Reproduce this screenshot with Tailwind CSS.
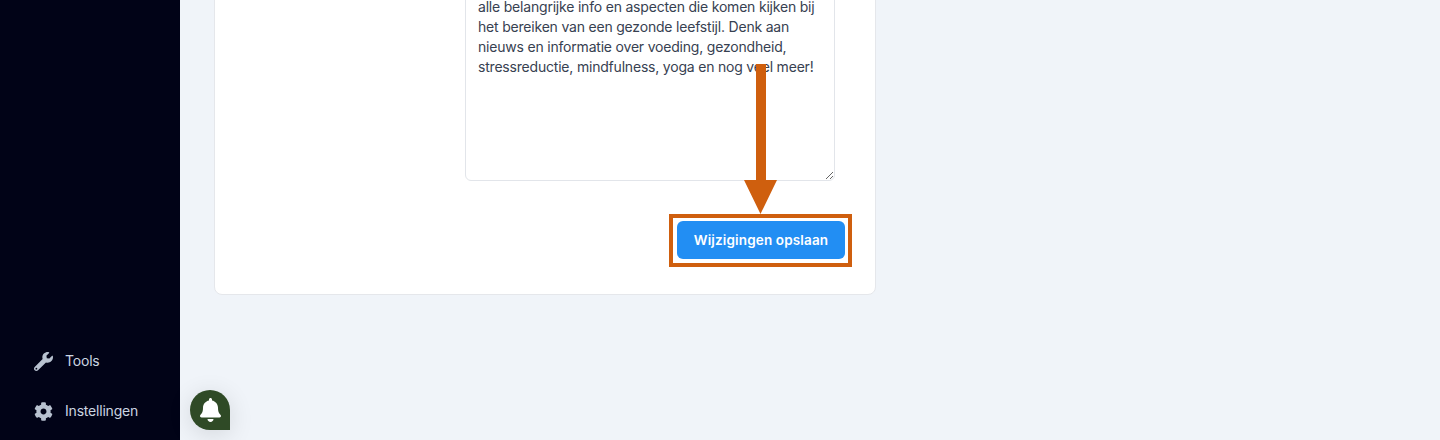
<!DOCTYPE html>
<html lang="nl">
<head>
  <meta charset="UTF-8">
  <meta name="viewport" content="width=device-width, initial-scale=1">
  <title>Instellingen</title>
  <script src="https://cdn.jsdelivr.net/npm/@tailwindcss/browser@4"></script>
</head>
<body class="bg-[#f0f4f9] font-[Inter,sans-serif] overflow-hidden">
  <div class="flex h-[440px] overflow-hidden relative">

    <!-- Sidebar -->
    <aside class="w-[180px] shrink-0 bg-[#010317] flex flex-col justify-end pb-1">
      <a class="flex items-center h-[50px] pl-[34px] text-sm tracking-[-0.2px] text-[#cbd5e1]">
        <svg class="w-[19px] h-[19px] mr-3 fill-[#b8c2d0]" viewBox="0 0 512 512"><path d="M507.73 109.1c-2.24-9.03-13.54-12.09-20.12-5.51l-74.36 74.36-67.88-11.31-11.31-67.88 74.36-74.36c6.62-6.62 3.43-17.9-5.66-20.16-47.38-11.74-99.55.91-136.58 37.93-39.64 39.64-50.55 97.1-34.05 147.2L18.74 402.76c-24.99 24.99-24.99 65.51 0 90.5 24.99 24.99 65.51 24.99 90.5 0l213.21-213.21c50.12 16.71 107.47 5.68 147.37-34.22 37.07-37.07 49.7-89.32 37.91-136.73zM64 472c-13.25 0-24-10.75-24-24 0-13.26 10.75-24 24-24s24 10.74 24 24c0 13.25-10.75 24-24 24z"/></svg>
        Tools
      </a>
      <a class="flex items-center h-[50px] pl-[34px] text-sm tracking-[-0.2px] text-[#cbd5e1]">
        <svg class="w-[19px] h-[19px] mr-3 fill-[#b8c2d0]" viewBox="0 0 512 512"><path d="M487.4 315.7l-42.6-24.6c4.3-23.2 4.3-47 0-70.2l42.6-24.6c4.9-2.8 7.1-8.6 5.5-14-11.1-35.6-30-67.8-54.7-94.6-3.8-4.1-10-5.1-14.8-2.3L380.8 110c-17.9-15.4-38.5-27.3-60.8-35.1V25.8c0-5.6-3.9-10.5-9.4-11.7-36.7-8.2-74.3-7.8-109.2 0-5.5 1.2-9.4 6.1-9.4 11.7V75c-22.2 7.9-42.8 19.8-60.8 35.1L88.7 85.5c-4.9-2.8-11-1.9-14.8 2.3-24.7 26.7-43.6 58.9-54.7 94.6-1.7 5.4.6 11.2 5.5 14L67.3 221c-4.3 23.2-4.3 47 0 70.2l-42.6 24.6c-4.9 2.8-7.1 8.6-5.5 14 11.1 35.6 30 67.8 54.7 94.6 3.8 4.1 10 5.1 14.8 2.3l42.6-24.6c17.9 15.4 38.5 27.3 60.8 35.1v49.2c0 5.6 3.9 10.5 9.4 11.7 36.7 8.2 74.3 7.8 109.2 0 5.5-1.2 9.4-6.1 9.4-11.7v-49.2c22.2-7.9 42.8-19.8 60.8-35.1l42.6 24.6c4.9 2.8 11 1.9 14.8-2.3 24.7-26.7 43.6-58.9 54.7-94.6 1.5-5.5-.7-11.3-5.6-14.1zM256 336c-44.1 0-80-35.9-80-80s35.9-80 80-80 80 35.9 80 80-35.9 80-80 80z"/></svg>
        Instellingen
      </a>
    </aside>

    <!-- Meldingen -->
    <div class="absolute left-[190px] top-[390px] w-10 h-10 rounded-full rounded-br-[3px] bg-[#2f4a26] shadow-[0_4px_24px_rgba(0,0,0,0.12)] flex items-center justify-center">
      <svg class="w-[21px] h-6 fill-white" viewBox="0 0 448 512"><path d="M224 512c35.32 0 63.97-28.65 63.97-64H160.03c0 35.35 28.65 64 63.97 64zm215.39-149.71c-19.32-20.76-55.47-51.99-55.47-154.29 0-77.7-54.48-139.9-127.94-155.16V32c0-17.67-14.32-32-31.98-32s-31.98 14.33-31.98 32v20.84C118.56 68.1 64.08 130.3 64.08 208c0 102.3-36.15 133.53-55.47 154.29-6 6.45-8.66 14.16-8.61 21.71.11 16.4 12.98 32 32.1 32h383.8c19.12 0 32-15.6 32.1-32 .05-7.55-2.61-15.27-8.61-21.71z"/></svg>
    </div>

    <!-- Main -->
    <main class="flex-1 pl-[34px]">
      <div class="w-[662px] -mt-[40px] pt-[28px] pb-[35px] pr-[30px] bg-white border border-[#e5e7eb] rounded-lg flex flex-col items-end">
        <textarea class="w-[370px] h-[192px] mr-[10px] block px-3 pt-[7px] pb-2 border border-[#e2e5ea] rounded-md text-sm tracking-[-0.2px] leading-5 text-[#374151] bg-white outline-none" readonly>alle belangrijke info en aspecten die komen kijken bij het bereiken van een gezonde leefstijl. Denk aan nieuws en informatie over voeding, gezondheid, stressreductie, mindfulness, yoga en nog veel meer!</textarea>

        <div class="relative mt-10">
          <button class="block w-[168px] h-[38px] rounded-md bg-[#228ef3] text-white text-[13.5px] font-semibold tracking-[0.15px]">Wijzigingen opslaan</button>

          <!-- Annotatie -->
          <div class="absolute -left-2 -right-[7px] -top-[7px] -bottom-2 border-4 border-[#cf5f0e]"></div>
          <svg class="absolute left-[67px] -top-[157px] w-[33px] h-[150px] fill-[#cf5f0e]" viewBox="0 0 33 150"><path d="M12 0h10v116h11L16.5 150 0 116h12z"/></svg>
        </div>
      </div>
    </main>
  </div>
</body>
</html>
